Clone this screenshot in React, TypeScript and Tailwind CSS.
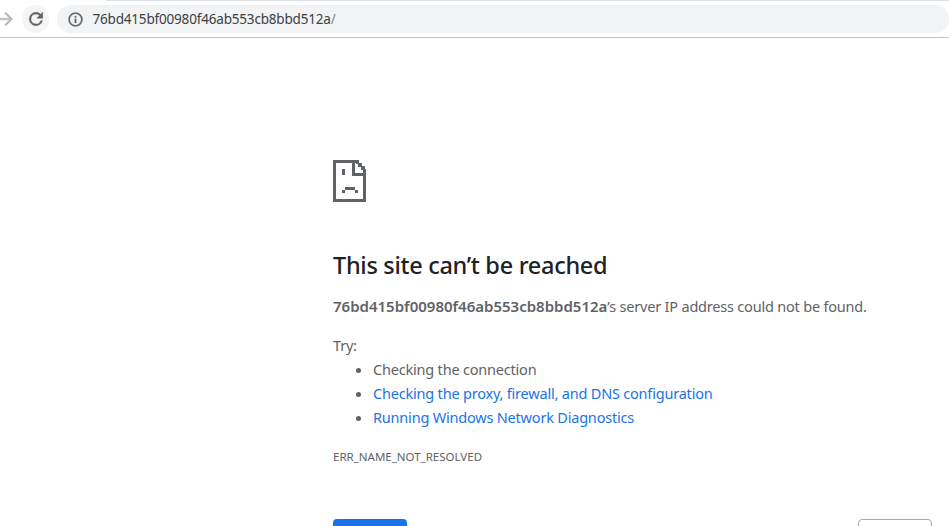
import React from 'react';

const DeadPage = () => (
  <svg width="33" height="42" viewBox="0 0 33 42" fill="#5f6368" shapeRendering="crispEdges">
    <path d="M0 0H23V3H3V39H30V16H33V42H0Z" />
    <path d="M19 3H22V13H33V16H19Z" />
    <path d="M23 0H26V3H29V6H32V9H33V14H30V10H28V7H25V4H23Z" />
    <rect x="9" y="9" width="3" height="6" />
    <path d="M9 30H12V33H9ZM12 27H22V30H12ZM22 30H25V33H22Z" />
  </svg>
);

const ReloadIcon = () => (
  <svg width="20" height="20" viewBox="0 0 24 24" fill="#5f6368" stroke="#5f6368" strokeWidth="0.6">
    <path d="M17.65 6.35A7.96 7.96 0 0 0 12 4a8 8 0 1 0 7.73 10h-2.08A6 6 0 1 1 12 6c1.66 0 3.14.69 4.22 1.78L13 11h7V4l-2.35 2.35z" />
  </svg>
);

const InfoIcon = () => (
  <svg width="17" height="17" viewBox="0 0 24 24" fill="#5f6368" stroke="#5f6368" strokeWidth="0.4">
    <path d="M11 7h2v2h-2zm0 4h2v6h-2zm1-9a10 10 0 1 0 0 20 10 10 0 0 0 0-20zm0 18a8 8 0 1 1 0-16 8 8 0 0 1 0 16z" />
  </svg>
);

const ForwardIcon = () => (
  <svg width="20" height="20" viewBox="0 0 24 24" fill="#b4b6b8" stroke="#b4b6b8" strokeWidth="0.5">
    <path d="M12 4l-1.41 1.41L16.17 11H4v2h12.17l-5.58 5.59L12 20l8-8z" />
  </svg>
);

export default function App() {
  return (
    <div className="h-screen overflow-hidden bg-white font-['Noto_Sans','Open_Sans',sans-serif] text-[#5f6368]">
      {/* Sliver of the tab strip above the toolbar */}
      <div className="ml-[106px] h-[1px] bg-[#dee1e6]" />

      {/* Browser toolbar */}
      <div className="flex h-[37px] items-center border-b border-[#c4c4c4]">
        <div className="ml-[-10px] flex w-[32px] justify-center">
          <ForwardIcon />
        </div>
        <div className="flex h-[28px] w-[28px] items-center justify-center rounded-full bg-[#f5f5f5]">
          <ReloadIcon />
        </div>
        <div className="ml-[8px] flex h-[28px] w-[900px] items-center rounded-full bg-[#f1f3f4] pl-[10px]">
          <InfoIcon />
          <span className="ml-[8px] text-[13.5px] tracking-[-0.18px] text-[#3c4043]">
            76bd415bf00980f46ab553cb8bbd512a<span className="text-[#80868b]">/</span>
          </span>
        </div>
      </div>

      {/* Error page */}
      <div className="ml-[333px] w-[616px] pt-[122px]">
        <DeadPage />
        <h1 className="mt-[47px] text-[23.5px] leading-[32px] font-medium tracking-[-0.3px] text-[#202124]">
          This site can’t be reached
        </h1>
        <p className="mt-[15px] text-[14.5px] leading-[20px] tracking-[-0.2px] whitespace-nowrap">
          <strong className="text-[15px] font-semibold tracking-normal">76bd415bf00980f46ab553cb8bbd512a</strong>
          ’s server IP address could not be found.
        </p>
        <p className="mt-[19px] text-[14.5px] leading-[20px] tracking-[-0.2px]">Try:</p>
        <ul className="mt-[2px] list-disc pl-[40px] text-[14.5px] leading-[24px] tracking-[-0.2px] marker:text-[#5f6368]">
          <li>Checking the connection</li>
          <li className="text-[#1a73e8]">Checking the proxy, firewall, and DNS configuration</li>
          <li className="text-[#1a73e8]">Running Windows Network Diagnostics</li>
        </ul>
        <div className="mt-[20px] text-[11.5px] leading-[16px]">ERR_NAME_NOT_RESOLVED</div>
        <div className="mt-[54px] flex justify-between pr-[17px]">
          <div className="h-[36px] w-[74px] rounded-[4px] bg-[#1a73e8]" />
          <div className="h-[36px] w-[74px] rounded-[4px] border border-[#a8a8a8] bg-white" />
        </div>
      </div>
    </div>
  );
}
